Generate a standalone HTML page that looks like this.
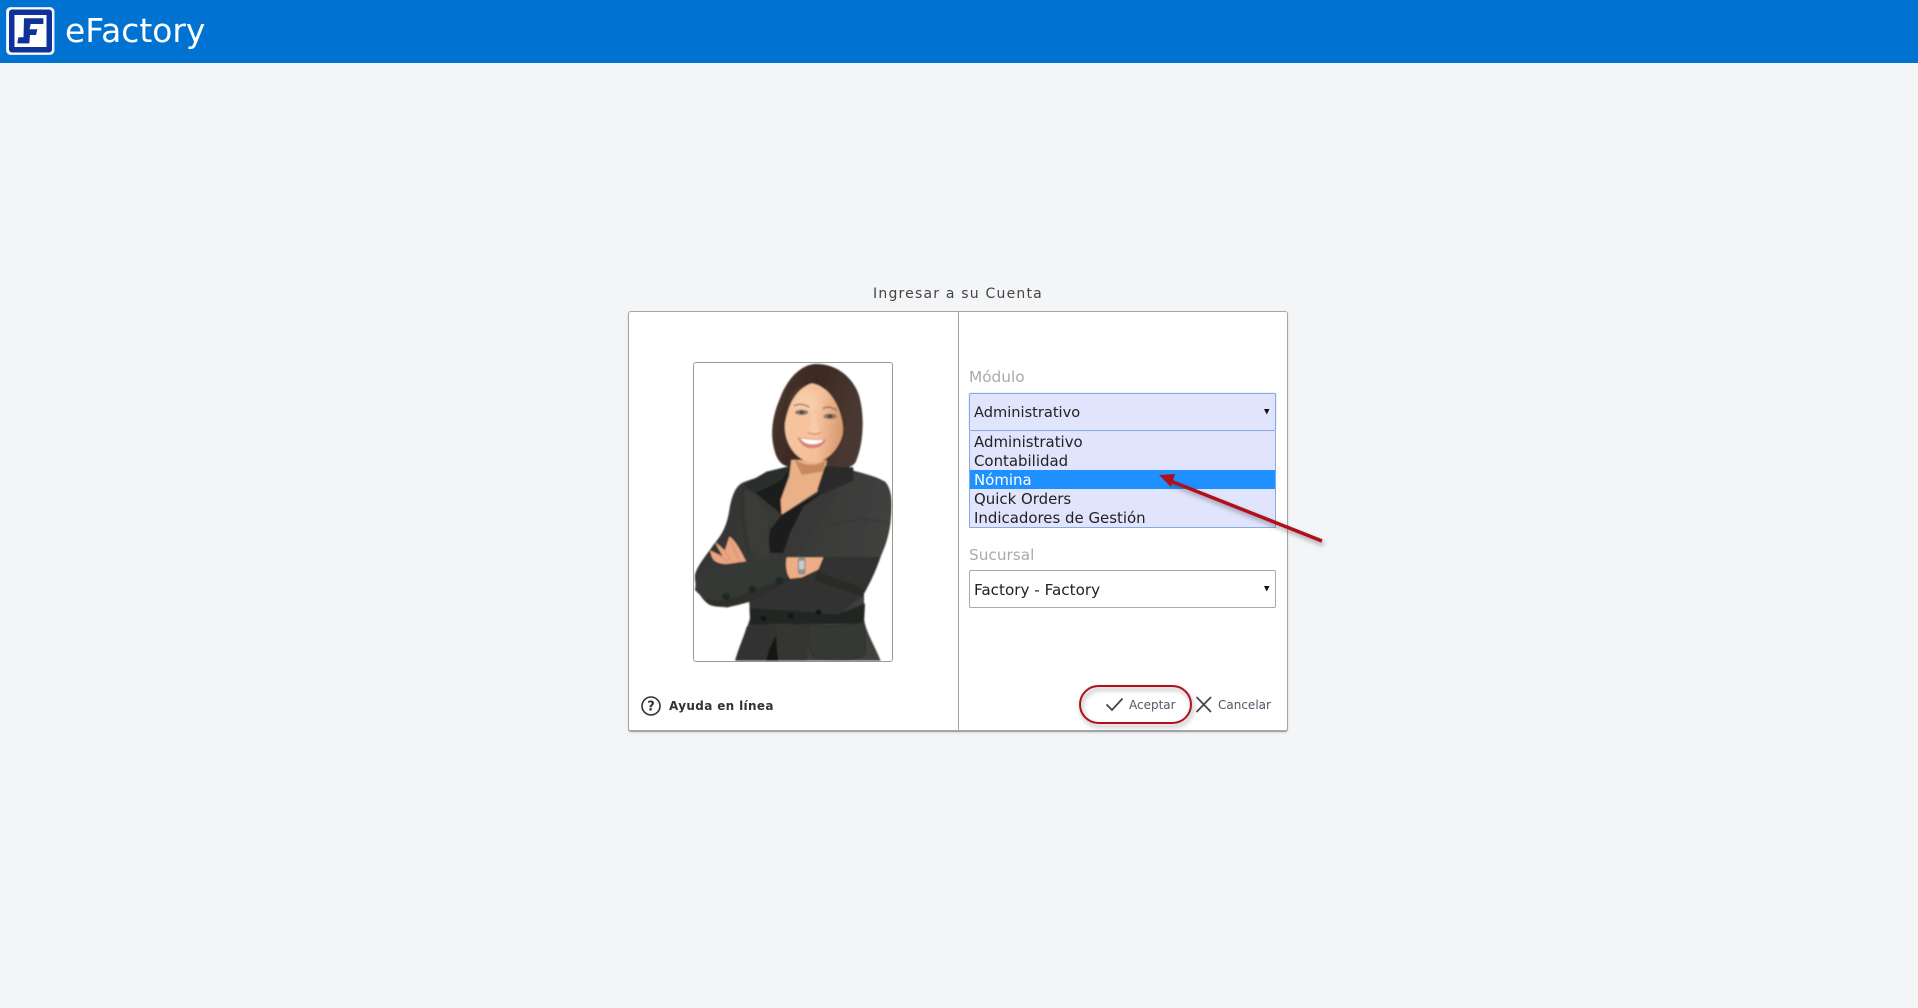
<!DOCTYPE html>
<html lang="es"><head><meta charset="utf-8"><title>eFactory</title>
<style>
html,body{margin:0;padding:0;width:1918px;height:1008px;overflow:hidden;background:#f4f5f7;font-family:"DejaVu Sans",Verdana,sans-serif}
.a{position:absolute;white-space:nowrap}
svg{position:absolute;overflow:visible}
.opt{position:absolute;left:970px;width:305px;height:19px;line-height:21px;font-size:14.95px;color:#222;text-indent:4px;overflow:hidden}
</style></head>
<body>
<div class="a" style="left:0;top:0;width:1918px;height:63px;background:#0073d2"></div>
<svg style="left:0;top:0" width="70" height="63" viewBox="0 0 70 63">
<rect x="6.5" y="7.5" width="47.5" height="47" rx="4" fill="#fff" stroke="#cfe4f7" stroke-width="1"/>
<rect x="9" y="9.5" width="43" height="43" rx="3" fill="#10309a"/>
<rect x="14.5" y="15" width="32" height="32" fill="#fff"/>
<path d="M24 18.3H43.4V24H30.7L29.5 29.3H37.4L36 35H30L29.3 43.4H17.3L18.4 37.3H23.5Z" fill="#10309a"/>
</svg>
<div class="a" style="left:65px;top:10px;font-size:32.9px;line-height:42px;color:#fff">eFactory</div>

<div class="a" style="left:628px;top:285px;width:660px;text-align:center;font-size:14px;letter-spacing:1.2px;line-height:18px;color:#444">Ingresar a su Cuenta</div>

<div class="a" style="left:628px;top:311px;width:658px;height:418px;background:#fff;border:1px solid #a5a5a5;border-bottom-width:2px;border-radius:3px;box-shadow:0 1px 2px rgba(0,0,0,.12)"></div>
<div class="a" style="left:958px;top:312px;width:1px;height:418px;background:#a5a5a5"></div>

<div class="a" style="left:693px;top:362px;width:198px;height:298px;border:1px solid #999;border-radius:3px"></div>
<svg style="left:690px;top:360px" width="205" height="305" viewBox="0 0 615 915">
<defs>
<filter id="b" x="-5%" y="-5%" width="110%" height="110%"><feGaussianBlur stdDeviation="2.2"/></filter>
<filter id="b3" x="-40%" y="-40%" width="180%" height="180%"><feGaussianBlur stdDeviation="12"/></filter>
<filter id="sh" x="-20%" y="-40%" width="140%" height="200%"><feGaussianBlur stdDeviation="2.5"/></filter>
<linearGradient id="hr" x1="0" y1="0" x2="1" y2="0.3"><stop offset="0" stop-color="#4a352c"/><stop offset=".5" stop-color="#3b2923"/><stop offset="1" stop-color="#4a3932"/></linearGradient>
<linearGradient id="fc" x1="0" y1="0" x2="1" y2="0.15"><stop offset="0" stop-color="#f5c6a0"/><stop offset=".65" stop-color="#f4c09a"/><stop offset="1" stop-color="#dc9c72"/></linearGradient>
<linearGradient id="jk" x1="0" y1="0" x2="1" y2="0.2"><stop offset="0" stop-color="#333432"/><stop offset=".6" stop-color="#383937"/><stop offset="1" stop-color="#3f403e"/></linearGradient>
<clipPath id="cl"><rect x="10" y="8" width="595" height="896" rx="8"/></clipPath>
</defs>
<g clip-path="url(#cl)"><g filter="url(#b)">
<path d="M375 12C430 10 482 42 505 100C525 160 522 250 497 306C487 324 460 326 440 322L300 320C275 318 260 300 252 265C240 220 248 165 270 115C290 60 330 15 375 12Z" fill="url(#hr)"/>
<path d="M300 318C260 340 200 350 158 368C135 380 125 410 118 450C112 490 100 520 72 552C50 585 22 615 15 645C12 680 35 722 60 735C85 745 130 742 178 725L180 775C170 810 150 850 135 902L572 902C555 860 530 820 522 780L522 700C545 660 560 625 572 590C590 550 603 510 605 440C606 410 600 380 585 365C560 350 520 340 490 332L400 316Z" fill="url(#jk)"/>
<path d="M304 300L410 300L405 345L385 392L275 464L270 425L298 350Z" fill="#eab087"/>
<path d="M312 295C340 322 395 320 410 292L398 335L335 345Z" fill="#c08055" opacity=".8"/>
<path d="M300 318L275 360L225 385L192 398L160 375L230 335Z" fill="#2c2d2b"/>
<path d="M405 318L490 322L490 362L445 382L385 408L382 388Z" fill="#2b2c2a"/>
<path d="M275 360L302 318L272 420L275 464L195 398L225 385Z" fill="#1e1e1c"/>
<path d="M275 464L395 395L385 408L340 440L300 520L282 580L232 578L240 510Z" fill="#1b1b1a"/>
<path d="M445 385L395 410L340 440L300 520L278 585L320 590L390 480Z" fill="#383937"/>
<path d="M160 392L170 470L180 560L220 605L240 575L232 510L240 470L192 400Z" fill="#3a3b39"/>
<path d="M160 380L155 470L175 580" stroke="#262725" stroke-width="3" fill="none" opacity=".6"/>
<path d="M420 500C470 480 540 470 600 490" stroke="#2a2b29" stroke-width="3" fill="none" opacity=".5"/>
<path d="M180 725L305 660L295 572L170 620L60 625L20 650L15 690L60 735L112 742Z" fill="#363735"/>
<path d="M180 725L305 660L300 648L190 692L100 724L40 715L60 735L112 742Z" fill="#2d2e2c"/>
<path d="M305 660L400 622L385 630L400 590L572 590C560 625 545 660 520 705L440 770L180 775L178 725Z" fill="#323331"/>
<path d="M385 632C430 660 490 665 525 690L518 712C470 690 420 680 372 660Z" fill="#292a28"/>
<path d="M180 745L300 752L440 764L525 730L522 790L180 795Z" fill="#242523"/>
<path d="M170 800L258 790L262 902L140 902Z" fill="#313230"/>
<path d="M258 790L355 795L350 902L260 902Z" fill="#343533"/>
<path d="M258 825L238 868L228 902L264 902Z" fill="#141414"/>
<path d="M355 795C400 802 470 800 522 785L528 880C510 905 400 905 372 890C356 870 354 830 355 795Z" fill="#363735" stroke="#282927" stroke-width="2"/>
<path d="M60 572L98 588L76 550L105 570L118 530C130 535 150 565 168 604L110 612C92 612 72 608 65 590Z" fill="#e9a681"/>
<path d="M76 548C95 560 115 585 122 602M62 573C80 580 100 592 115 606M118 530C128 560 140 585 150 605" stroke="#cf8c68" stroke-width="2.5" fill="none"/>
<path d="M290 592L400 592L385 628L335 652L300 656C288 640 286 610 290 592Z" fill="#eeae85"/>
<rect x="323" y="592" width="24" height="52" rx="8" fill="#8f918f"/>
<rect x="327" y="602" width="16" height="26" rx="4" fill="#c9cbc9"/>
<circle cx="108" cy="710" r="12" fill="#1f2a28"/>
<circle cx="187" cy="689" r="12" fill="#1f2a28"/>
<circle cx="268" cy="663" r="12" fill="#1f2a28"/>
<circle cx="220" cy="776" r="9" fill="#141716"/>
<circle cx="302" cy="767" r="9" fill="#141716"/>
<circle cx="385" cy="757" r="9" fill="#141716"/>
<path d="M365 70C320 85 295 130 285 190C280 250 320 305 370 308C420 305 458 250 459 210C459 170 440 120 410 92C395 80 380 72 365 70Z" fill="url(#fc)"/>
<ellipse cx="350" cy="130" rx="35" ry="35" fill="#fbd8bb" opacity=".55" filter="url(#b3)"/>
<path d="M312 138C325 130 345 132 358 142" stroke="#7b5139" stroke-width="4" fill="none" opacity=".75"/>
<path d="M398 146C410 138 428 140 440 152" stroke="#7b5139" stroke-width="4" fill="none" opacity=".75"/>
<ellipse cx="335" cy="157" rx="20" ry="8" fill="#8a766a"/>
<ellipse cx="420" cy="169" rx="20" ry="8" fill="#8a766a"/>
<ellipse cx="335" cy="157" rx="7" ry="6" fill="#4a4a48"/>
<ellipse cx="420" cy="169" rx="7" ry="6" fill="#4a4a48"/>
<path d="M368 160C364 185 356 208 352 214C362 224 380 224 392 216C384 200 376 178 374 160Z" fill="#fbd5b8" opacity=".55"/>
<path d="M354 216C364 224 382 224 392 216" stroke="#cd8b66" stroke-width="3.5" fill="none"/>
<path d="M322 232C345 235 385 240 408 238C400 262 375 268 355 264C338 260 328 245 322 232Z" fill="#d9847a"/>
<path d="M331 235C350 238 380 241 400 240C392 252 372 254 358 252C345 250 337 243 331 235Z" fill="#fff"/>
</g></g>
</svg>

<svg style="left:640px;top:695px" width="24" height="24" viewBox="0 0 24 24">
<circle cx="11" cy="11" r="9" fill="none" stroke="#333" stroke-width="1.6"/>
<text x="11" y="15.5" text-anchor="middle" font-family="DejaVu Sans,sans-serif" font-size="13" font-weight="700" fill="#333">?</text>
</svg>
<div class="a" style="left:669px;top:697px;font-size:12px;font-weight:700;letter-spacing:.35px;line-height:18px;color:#333">Ayuda en línea</div>

<div class="a" style="left:969px;top:367px;font-size:15.3px;line-height:20px;color:#aaa">Módulo</div>
<div class="a" style="left:969px;top:393px;width:305px;height:36px;background:#e0e4fc;border:1px solid #8aa8e2;border-radius:2px;box-shadow:0 0 1px #8aa8e2"></div>
<div class="a" style="left:974px;top:403px;font-size:14.6px;line-height:20px;color:#222">Administrativo</div>
<svg style="left:1264px;top:409px" width="6" height="6"><path d="M0 0H5.5L2.75 5.5Z" fill="#111"/></svg>

<div class="a" style="left:969px;top:431px;width:305px;height:96px;background:#e0e4fc;border:1px solid #8aa8e2;border-top:0"></div>
<div class="opt" style="top:432px">Administrativo</div>
<div class="opt" style="top:451px">Contabilidad</div>
<div class="opt" style="top:470px;background:#1e90ff;color:#fff">Nómina</div>
<div class="opt" style="top:489px">Quick Orders</div>
<div class="opt" style="top:508px">Indicadores de Gestión</div>

<div class="a" style="left:969px;top:545px;font-size:15.3px;line-height:20px;color:#aaa">Sucursal</div>
<div class="a" style="left:969px;top:570px;width:305px;height:36px;background:#fff;border:1px solid #a9a9a9;border-radius:2px"></div>
<div class="a" style="left:974px;top:580px;font-size:15.2px;line-height:20px;color:#222">Factory - Factory</div>
<svg style="left:1264px;top:586px" width="6" height="6"><path d="M0 0H5.5L2.75 5.5Z" fill="#111"/></svg>

<svg style="left:1099px;top:694px" width="30" height="24" viewBox="0 0 30 24">
<path d="M7.5 10.5L13 16L23.5 4.5" fill="none" stroke="#444" stroke-width="1.8"/>
</svg>
<div class="a" style="left:1129px;top:696px;font-size:12px;line-height:18px;color:#556">Aceptar</div>
<svg style="left:1189px;top:690px" width="28" height="28" viewBox="0 0 28 28">
<path d="M7.5 7L22 22M22 7L7.5 22" fill="none" stroke="#444" stroke-width="1.7"/>
</svg>
<div class="a" style="left:1218px;top:696px;font-size:12px;line-height:18px;color:#556">Cancelar</div>

<svg style="left:0;top:0;pointer-events:none" width="1918" height="1008" viewBox="0 0 1918 1008">
<g filter="url(#sh)" opacity=".45" transform="translate(1.5,3)">
<path d="M1322 541L1168 480" stroke="#333" stroke-width="3.5" fill="none"/>
<rect x="1080" y="686" width="111" height="37" rx="18.5" fill="none" stroke="#333" stroke-width="2"/>
</g>
<path d="M1322 541L1168 480" stroke="#b0101c" stroke-width="3.5" fill="none"/>
<path d="M1159 475L1175 474L1171 487Z" fill="#b0101c"/>
<rect x="1080" y="686" width="111" height="37" rx="18.5" fill="none" stroke="#b0101c" stroke-width="2"/>
</svg>
</body></html>
